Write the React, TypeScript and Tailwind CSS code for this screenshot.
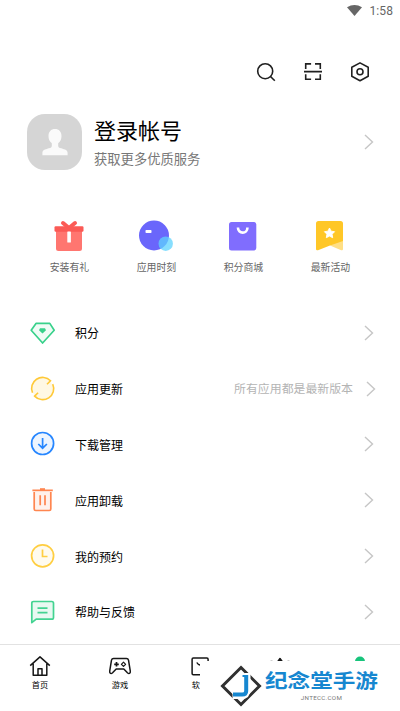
import React from 'react';

const Chevron = () => (
  <svg width="10" height="16" viewBox="0 0 10 16" fill="none" stroke="#c6c6c6" strokeWidth="1.4">
    <path d="M1 1l7.500 7L1 15" />
  </svg>
);

const shortcuts = [
  {
    label: '安装有礼',
    icon: (
      <svg width="32" height="32" viewBox="1 0 32 32">
        <path d="M3 9h26v19.500a2.500 2.500 0 0 1-2.500 2.500h-21a2.500 2.500 0 0 1-2.500-2.500z" fill="#ff7670" />
        <path d="M10 3l6 5 6-5" fill="none" stroke="#fb5a55" strokeWidth="4" strokeLinecap="round" />
        <rect x="1.500" y="6.300" width="29" height="5.500" rx="1.200" fill="#fb5a55" />
        <rect x="14.300" y="11.500" width="3.600" height="11" rx=".6" fill="#fff" />
      </svg>
    ),
  },
  {
    label: '应用时刻',
    icon: (
      <svg width="36" height="32" viewBox="0 0 36 32" className="-ml-[3px] shrink-0">
        <circle cx="16" cy="15.500" r="15" fill="#6a66fb" />
        <circle cx="27.700" cy="23.700" r="7.200" fill="#5fd3fd" fillOpacity=".75" />
        <rect x="7.500" y="10" width="6" height="3" rx=".8" fill="#fff" />
      </svg>
    ),
  },
  {
    label: '积分商城',
    icon: (
      <svg width="32" height="32" viewBox="1 0 32 32">
        <rect x="2" y="2" width="27.300" height="28.500" rx="2.500" fill="#806dfe" />
        <path d="M11 7.500v.4a4.700 4.700 0 0 0 9.400 0v-.4" fill="none" stroke="#fff" strokeWidth="2.600" />
      </svg>
    ),
  },
  {
    label: '最新活动',
    icon: (
      <svg width="32" height="32" viewBox="1 0 32 32">
        <path d="M2 3.500A2.500 2.500 0 0 1 4.500 1h22A2.500 2.500 0 0 1 29 3.500v22L16 25.500 4 30.200q-2 .6-2-1.200z" fill="#ffc727" />
        <path d="M16 25.500L29 21v8q0 1.800-1.800 1.200z" fill="#ffdf85" />
        <path d="M15.500 8l1.600 3.200 3.500.5-2.500 2.500.6 3.500-3.200-1.600-3.200 1.600.6-3.500-2.500-2.500 3.500-.5z" fill="#fff" stroke="#fff" strokeWidth=".9" strokeLinejoin="round" />
      </svg>
    ),
  },
];

const rows = [
  {
    label: '积分',
    icon: (
      <svg width="26" height="26" viewBox="0 0 26 26" fill="#f0fcf6" stroke="#38d18b" strokeWidth="1.700" strokeLinejoin="round">
        <path d="M6 3.400h13.800l4.400 6.900L12.600 23 1.200 10.300z" />
        <path d="M10 8.300h5l1 1.900-3.500 3.300L9 10.200z" fill="#38d18b" stroke="none" />
      </svg>
    ),
  },
  {
    label: '应用更新',
    note: '所有应用都是最新版本',
    icon: (
      <svg width="26" height="26" viewBox="0 0 26 26" fill="none" stroke="#ffc938" strokeWidth="1.600">
        <circle cx="12.600" cy="12.500" r="10.500" fill="#fff8e4" stroke="none" />
        <path d="M2.500 16.700A11 11 0 0 1 20.500 4.700l-3.500 3.500M22.700 8.100A11 11 0 0 1 4.600 20.100l3.500-3.400" />
      </svg>
    ),
  },
  {
    label: '下载管理',
    icon: (
      <svg width="26" height="26" viewBox="0 0 26 26" fill="none" stroke="#2686ff" strokeWidth="1.700">
        <circle cx="12.600" cy="12.500" r="11" fill="#edf5ff" />
        <path d="M12.600 7v10M8.300 13l4.300 4.200 4.300-4.200" />
      </svg>
    ),
  },
  {
    label: '应用卸载',
    icon: (
      <svg width="26" height="26" viewBox="0 0 26 26" fill="none" stroke="#ff8650" strokeWidth="1.700">
        <path d="M4.200 5v17q0 1.500 1.500 1.500h13.600q1.500 0 1.500-1.500V5" fill="#fff2ec" />
        <path d="M2.400 3.300h20.400M10.200 8.200v10M15 8.200v10" />
        <path d="M10 2.200h5" strokeWidth="2" />
      </svg>
    ),
  },
  {
    label: '我的预约',
    icon: (
      <svg width="26" height="26" viewBox="0 0 26 26" fill="none" stroke="#ffce41" strokeWidth="1.700">
        <circle cx="12.600" cy="12.800" r="11" fill="#fffbef" />
        <path d="M12.500 6.500v7h5" />
      </svg>
    ),
  },
  {
    label: '帮助与反馈',
    icon: (
      <svg width="26" height="26" viewBox="0 0 26 26" fill="none" stroke="#43d391" strokeWidth="1.700" strokeLinejoin="round">
        <path d="M1.800 23.700V4.200q0-1.700 1.700-1.700h18.300q1.700 0 1.700 1.700v14.200q0 1.700-1.700 1.700H6.200z" fill="#e8f9f1" />
        <path d="M7.500 9.200h10M7.500 13.700h10" />
      </svg>
    ),
  },
];

const tabs = [
  {
    label: '首页',
    icon: (
      <>
        <path d="M1.200 10.600L11 1.900l9.800 8.700M4.200 8.800v11.400h13.600V8.800" />
        <path d="M9 20.200v-6.500h4v6.500" />
      </>
    ),
  },
  {
    label: '游戏',
    icon: (
      <>
        <path d="M4.500 3.500h13q1.600 0 2 1.600l1.800 11q.2 2.300-1.600 2.300-.9 0-1.500-.8l-3.400-3.600H7.200l-3.400 3.600q-.6.800-1.500.8-1.800 0-1.600-2.300l1.800-11q.4-1.600 2-1.600z" />
        <path d="M7.500 7v4.600M5.200 9.300h4.600" strokeWidth="1.700" />
        <path d="M14.500 7.200l2.100 2.100-2.100 2.100-2.100-2.100z" strokeWidth="1.200" />
      </>
    ),
  },
  {
    label: '软件',
    icon: (
      <>
        <rect x="3.100" y="3" width="16" height="16.800" rx="1.200" />
        <path d="M7.800 7.500q1.300 2.300 3.200 2.500t3.200-2.500" />
      </>
    ),
  },
  {
    icon: (
      <>
        <path d="M11 3.500l2.500 3.500h-5z" fill="#171717" />
        <path d="M1.500 6.300h2M18.500 6.300h2" strokeWidth="1" />
      </>
    ),
  },
  { icon: <circle cx="11" cy="6.500" r="5" fill="#18c47c" stroke="none" /> },
];

export default function App() {
  return (
    <div className="relative flex h-[711px] w-[400px] flex-col overflow-hidden bg-white font-['Roboto','Noto_Sans_CJK_SC',sans-serif] text-black">
      <header className="flex h-[21px] items-center justify-end gap-[7px] pr-[7px] text-[12px] text-[#666]">
        <svg width="15" height="11" viewBox="0 0 15 11">
          <path d="M0 2.300Q7.500-2.300 15 2.300L7.500 11z" fill="#666" />
        </svg>
        <span className="tracking-[.1px]">1:58</span>
      </header>

      <div className="mt-[41px] flex h-5 items-center justify-end gap-[27px] pr-[30px]">
        <svg width="20" height="20" viewBox="0 0 20 20" fill="none" stroke="#202020" strokeWidth="1.600">
          <circle cx="9.200" cy="9.200" r="7.500" />
          <path d="M14.500 14.500l4.300 4.300" />
        </svg>
        <svg width="20" height="20" viewBox="0 0 20 20" fill="none" stroke="#202020" strokeWidth="1.600">
          <path d="M2.700 7V1.900h5.400M12 1.900h5.300V7M2.700 12.300v5h5.400M12 17.300h5.300v-5M1 9.600h18" />
        </svg>
        <svg width="20" height="20" viewBox="0 0 20 20" fill="none" stroke="#202020" strokeWidth="1.600" strokeLinejoin="round">
          <path d="M10 .9l8.200 4.300v9.100L10 18.700l-8.200-4.400V5.200z" />
          <circle cx="10" cy="9.800" r="3" />
        </svg>
      </div>

      <section className="mt-8 flex h-14 items-center pl-[27px] pr-[26px]">
        <div className="flex h-[56px] w-[55px] items-center justify-center rounded-[18px] bg-[#d5d5d5]">
          <svg width="26" height="27" viewBox="0 0 26 27" fill="#fafafa">
            <path d="M13 0c4 0 6.500 2.700 6.500 7 0 3.300-1 5.500-3.300 7.300v2.400c0 1.500 1 2 3 2.600 4.200 1.300 6.400 2 6.400 4.500v2.400H.4v-2.400c0-2.500 2.200-3.200 6.400-4.500 2-.6 3-1.100 3-2.600v-2.400C7.500 12.500 6.500 10.300 6.500 7c0-4.300 2.500-7 6.500-7z" />
          </svg>
        </div>
        <div className="ml-3 flex-1 pt-1">
          <h1 className="text-[22px] leading-[32px]">登录帐号</h1>
          <p className="text-[13.300px] leading-[24px] text-[#777]">获取更多优质服务</p>
        </div>
        <Chevron />
      </section>

      <section className="mt-[50px] flex px-[26px]">
        {shortcuts.map((item) => (
          <div key={item.label} className="flex w-[87px] flex-col items-center">
            <div className="flex h-8 w-8">{item.icon}</div>
            <span className="mt-2 text-[9.900px] leading-[15px] text-[#666]">{item.label}</span>
          </div>
        ))}
      </section>

      <ul className="mt-[30px] h-[335px] pl-[30px]">
        {rows.map((row) => (
          <li key={row.label} className="flex h-[55.800px] items-center">
            {row.icon}
            <span className="ml-[19px] flex-1 pt-[3px] text-[12px]">{row.label}</span>
            {row.note && <span className="mr-[13px] pt-[3px] text-[11.900px] text-[#b4b4b4]">{row.note}</span>}
            <div className={row.note ? 'mr-6' : 'mr-[26px]'}>
              <Chevron />
            </div>
          </li>
        ))}
      </ul>

      <nav className="mt-1 flex flex-1 border-t border-[#e2e2e2]">
        {tabs.map((tab, i) => (
          <div key={i} className="flex w-20 flex-col items-center pt-[10px]">
            <svg width="22" height="22" viewBox="0 0 22 22" fill="none" stroke="#171717" strokeWidth="1.500" strokeLinejoin="round">
              {tab.icon}
            </svg>
            {tab.label && <span className="mt-[2px] text-[8.200px] leading-[12px]">{tab.label}</span>}
          </div>
        ))}
      </nav>

      {/* site badge over the right part of the tab bar */}
      <div className="absolute bottom-0 right-0 flex h-[50px] w-[200px] bg-white pl-[20px]">
        <svg width="42" height="42" viewBox="0 0 42 42" fill="none" className="mt-[4px] shrink-0">
          <path d="M21 2.500L39.500 21 21 39.500 2.500 21z" stroke="#303030" strokeWidth="3" />
          <path d="M27.500 8v16q0 7-6 7h-9" stroke="#fff" strokeWidth="6" />
          <path d="M26.200 10v16q0 3.500-4 3.500h-9.200" stroke="#1687d0" strokeWidth="4" />
          <path d="M22.500 11h4" stroke="#1687d0" strokeWidth="2" />
        </svg>
        <div className="ml-[3px] mt-[8px] flex flex-col items-center">
          <span className="origin-center scale-y-[.88] whitespace-nowrap text-[22.600px] font-bold leading-[26px] text-[#1687d0]">纪念堂手游</span>
          <span className="-mt-px text-[6.200px] leading-[8px] tracking-[.3px] text-[#777]">JNTECC.COM</span>
        </div>
      </div>
    </div>
  );
}
